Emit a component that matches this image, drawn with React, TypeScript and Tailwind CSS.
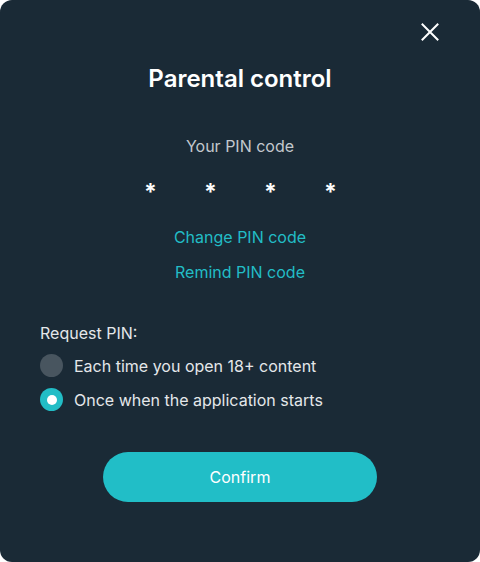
import React from "react";

export default function App() {
  return (
    <div className="w-[480px] h-[562px] bg-white" style={{ fontFamily: "Inter, 'Noto Sans', sans-serif" }}>
      <div className="relative w-full h-full rounded-[12px] bg-[#1a2a36] flex flex-col">
        <button className="absolute right-[40px] top-[22px] w-[20px] h-[20px] flex items-center justify-center">
          <svg width="20" height="20" viewBox="0 0 20 20" fill="none" stroke="white" strokeWidth="2" strokeLinecap="square">
            <path d="M2.5 2.5 L17.5 17.5 M17.5 2.5 L2.5 17.5" />
          </svg>
        </button>
        <h1 className="mt-[63px] text-center text-[24px] leading-[32px] font-semibold text-white">Parental control</h1>
        <p className="mt-[41px] text-center text-[16px] leading-[20px] text-[#c3c8cd]">Your PIN code</p>
        <div className="mt-[24px] flex justify-center gap-[48px] text-white text-[23px] font-bold leading-[24px]">
          <span className="w-[12px] text-center">*</span>
          <span className="w-[12px] text-center">*</span>
          <span className="w-[12px] text-center">*</span>
          <span className="w-[12px] text-center">*</span>
        </div>
        <p className="mt-[23px] text-center text-[16px] leading-[20px] text-[#22bdc6]">Change PIN code</p>
        <p className="mt-[15px] text-center text-[16px] leading-[20px] text-[#22bdc6]">Remind PIN code</p>
        <div className="mt-[41px] px-[40px] flex flex-col">
          <p className="text-[16px] leading-[20px] text-[#e4e7ea]">Request PIN:</p>
          <div className="mt-[11px] flex items-center gap-[11px]">
            <span className="w-[23px] h-[23px] rounded-full bg-[#48555f]" />
            <span className="text-[16px] leading-[20px] text-[#e4e7ea]">Each time you open 18+ content</span>
          </div>
          <div className="mt-[11px] flex items-center gap-[11px]">
            <span className="w-[23px] h-[23px] rounded-full bg-[#22bdc6] flex items-center justify-center">
              <span className="w-[10px] h-[10px] rounded-full bg-white" />
            </span>
            <span className="text-[16px] leading-[20px] text-[#e4e7ea]">Once when the application starts</span>
          </div>
        </div>
        <div className="mt-[41px] flex justify-center">
          <button className="w-[274px] h-[50px] rounded-full bg-[#21bec7] text-white text-[16px] font-normal">Confirm</button>
        </div>
      </div>
    </div>
  );
}
